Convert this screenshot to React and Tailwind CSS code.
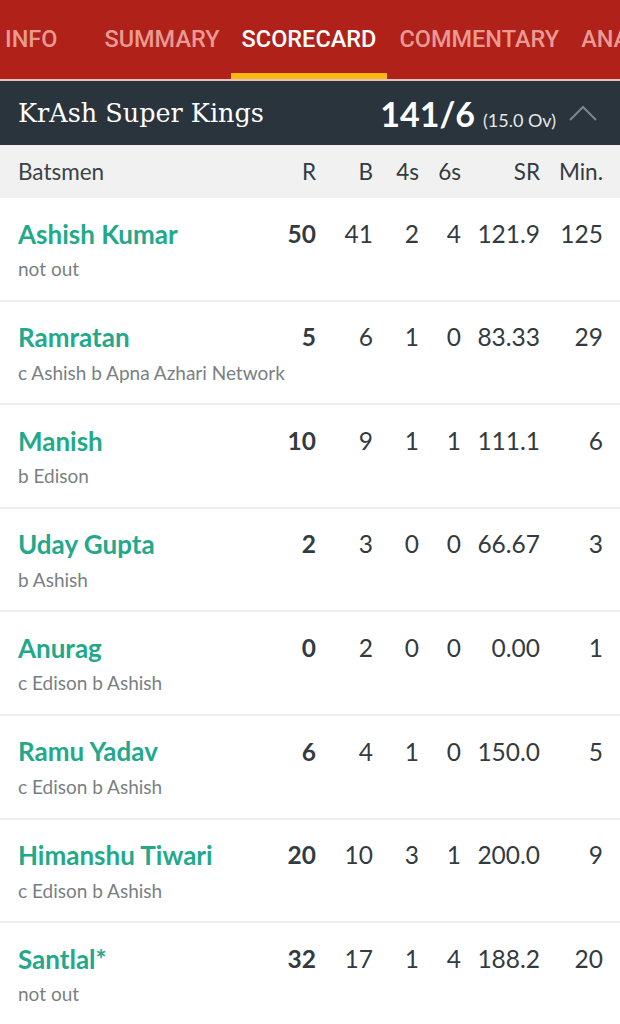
import React from "react";

const rows = [
  ["Ashish Kumar", "not out", "50", "41", "2", "4", "121.9", "125"],
  ["Ramratan", "c Ashish b Apna Azhari Network", "5", "6", "1", "0", "83.33", "29"],
  ["Manish", "b Edison", "10", "9", "1", "1", "111.1", "6"],
  ["Uday Gupta", "b Ashish", "2", "3", "0", "0", "66.67", "3"],
  ["Anurag", "c Edison b Ashish", "0", "2", "0", "0", "0.00", "1"],
  ["Ramu Yadav", "c Edison b Ashish", "6", "4", "1", "0", "150.0", "5"],
  ["Himanshu Tiwari", "c Edison b Ashish", "20", "10", "3", "1", "200.0", "9"],
  ["Santlal*", "not out", "32", "17", "1", "4", "188.2", "20"],
];

const body = { fontFamily: "Lato, 'Open Sans', sans-serif" };

function Cols({ r, b, f, s, sr, m, bold }) {
  return (
    <div className="flex items-center text-[#333b40]">
      <div className={"w-[60px] text-right " + (bold ? "font-bold" : "")}>{r}</div>
      <div className="w-[57px] text-right">{b}</div>
      <div className="w-[46px] text-right">{f}</div>
      <div className="w-[42px] text-right">{s}</div>
      <div className="w-[79px] text-right">{sr}</div>
      <div className="w-[63px] text-right">{m}</div>
    </div>
  );
}

export default function App() {
  return (
    <div className="w-[620px] h-[1024px] overflow-hidden bg-white" style={body}>
      <div className="h-[79px] bg-[#b0211a] flex items-end text-[23.5px] font-medium text-[#e99a92] whitespace-nowrap overflow-hidden" style={{ fontFamily: "Roboto, sans-serif" }}>
        <div className="ml-[5px] h-[79px] flex items-center">INFO</div>
        <div className="ml-[47px] h-[79px] flex items-center">SUMMARY</div>
        <div className="ml-[11px] h-[79px] px-[11px] flex items-center border-b-[6px] border-[#fdb913] pt-[6px] text-white">SCORECARD</div>
        <div className="ml-[12px] h-[79px] flex items-center">COMMENTARY</div>
        <div className="ml-[22px] h-[79px] flex items-center">ANALYSIS</div>
      </div>
      <div className="h-[2px] bg-[#e8c0bc]" />
      <div className="h-[64px] bg-[#29343c] flex items-center pl-[18px] pr-[22px] text-white">
        <div className="flex-1 text-[25.5px]" style={{ fontFamily: "'DejaVu Serif', serif" }}>KrAsh Super Kings</div>
        <div className="flex items-baseline">
          <span className="text-[34px] font-bold">141/6</span>
          <span className="text-[18px] ml-[8px] text-[#e6e8ea]">(15.0 Ov)</span>
        </div>
        <svg width="30" height="18" viewBox="0 0 30 18" className="ml-[12px]">
          <path d="M2 16 L15 3 L28 16" fill="none" stroke="#7d868c" strokeWidth="2" />
        </svg>
      </div>
      <div className="h-[53px] bg-[#f1f1f1] flex items-center pl-[18px] pr-[17px] text-[22.5px] text-[#3b4347]">
        <div className="flex-1">Batsmen</div>
        <Cols r="R" b="B" f="4s" s="6s" sr="SR" m="Min." />
      </div>
      {rows.map((row, i) => (
        <div key={i} className="h-[103.6px] border-b-2 border-[#eeeeee] pl-[18px] pr-[17px] pt-[20px]">
          <div className="flex items-center text-[24.5px] h-[32px]">
            <div className="flex-1 font-bold text-[26px] text-[#23a98a]">{row[0]}</div>
            <Cols r={row[2]} b={row[3]} f={row[4]} s={row[5]} sr={row[6]} m={row[7]} bold />
          </div>
          <div className="text-[19px] text-[#7a7f82] mt-[5px] whitespace-nowrap">{row[1]}</div>
        </div>
      ))}
    </div>
  );
}
